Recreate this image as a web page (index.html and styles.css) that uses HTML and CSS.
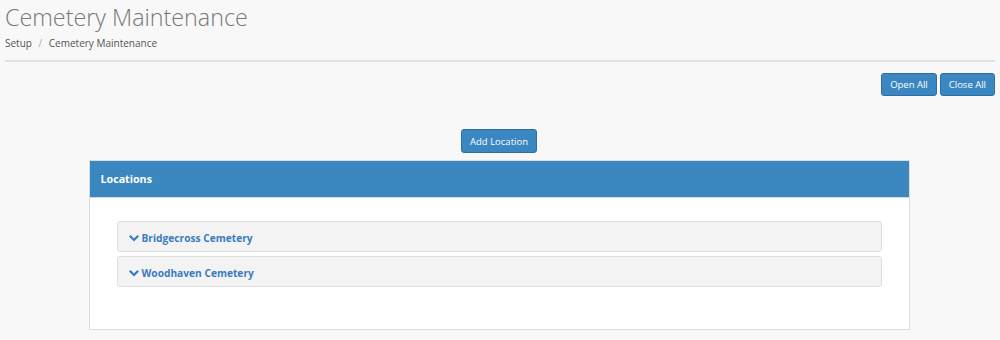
FILE: index.html
```html
<!DOCTYPE html>
<html lang="en">
<head>
    <meta charset="UTF-8">
    <title>Cemetery Maintenance</title>
    <link rel="stylesheet" href="styles.css">
</head>
<body>
    <div class="page">
        <h1 class="page-title">Cemetery Maintenance</h1>
        <div class="breadcrumb">
            <span>Setup</span>
            <span class="sep">/</span>
            <span>Cemetery Maintenance</span>
        </div>
        <hr class="rule">
        <div class="top-actions">
            <button class="btn">Open All</button>
            <button class="btn">Close All</button>
        </div>
        <div class="center-action">
            <button class="btn">Add Location</button>
        </div>
        <div class="panel">
            <div class="panel-heading">Locations</div>
            <div class="panel-body">
                <div class="loc-item">
                    <svg class="chev" viewBox="0 0 10 7"><path d="M0 1.6 L1.6 0 L5 3.4 L8.4 0 L10 1.6 L5 6.6 Z" /></svg>
                    <span>Bridgecross Cemetery</span>
                </div>
                <div class="loc-item">
                    <svg class="chev" viewBox="0 0 10 7"><path d="M0 1.6 L1.6 0 L5 3.4 L8.4 0 L10 1.6 L5 6.6 Z" /></svg>
                    <span>Woodhaven Cemetery</span>
                </div>
            </div>
        </div>
    </div>
</body>
</html>
```

FILE: styles.css
```css
body {
    margin: 0;
    background: #f8f8f8;
    font-family: 'Open Sans', Arial, sans-serif;
    color: #555;
}
.page {
    padding: 0 6px 0 4px;
}
.page-title {
    margin: 0 0 0 1px;
    padding-top: 2px;
    font-size: 23.3px;
    font-weight: 300;
    color: #777;
    line-height: 30px;
}
.breadcrumb {
    margin: 3px 0 0 1px;
    font-size: 10px;
    color: #555;
    line-height: 16px;
}
.breadcrumb .sep {
    color: #aaa;
    margin: 0 4px;
}
.rule {
    border: none;
    border-top: 2px solid #e2e2e2;
    margin: 9px -1px 0 1px;
}
.top-actions {
    display: flex;
    justify-content: flex-end;
    gap: 3px;
    margin: 11px -1px 0 0;
}
.btn {
    font-family: 'Open Sans', Arial, sans-serif;
    font-size: 9.5px;
    color: #fff;
    background: #3a87c1;
    border: 1px solid #2e6ea3;
    border-radius: 3px;
    padding: 0 8px;
    height: 23px;
    line-height: 21px;
    cursor: pointer;
}
.center-action {
    display: flex;
    justify-content: center;
    margin-top: 33px;
}
.center-action .btn {
    height: 24px;
}
.panel {
    width: 819px;
    margin: 7px auto 0;
    background: #fff;
    border: 1px solid #dcdcdc;
}
.panel-heading {
    background: #3b87c0;
    color: #fff;
    font-size: 10.7px;
    font-weight: bold;
    height: 36px;
    line-height: 36px;
    padding: 0 11px;
    border-bottom: 1px solid #d6d6d6;
}
.panel-body {
    padding: 23px 27px 42px;
    display: flex;
    flex-direction: column;
    gap: 4px;
}
.loc-item {
    display: flex;
    align-items: center;
    gap: 3px;
    height: 31px;
    box-sizing: border-box;
    padding: 3px 11px 0;
    background: #f3f3f3;
    border: 1px solid #dedede;
    border-radius: 3px;
    font-size: 10.2px;
    font-weight: bold;
    color: #3a7cc0;
}
.chev {
    width: 10px;
    height: 7px;
    fill: #3a7cc0;
}
```
